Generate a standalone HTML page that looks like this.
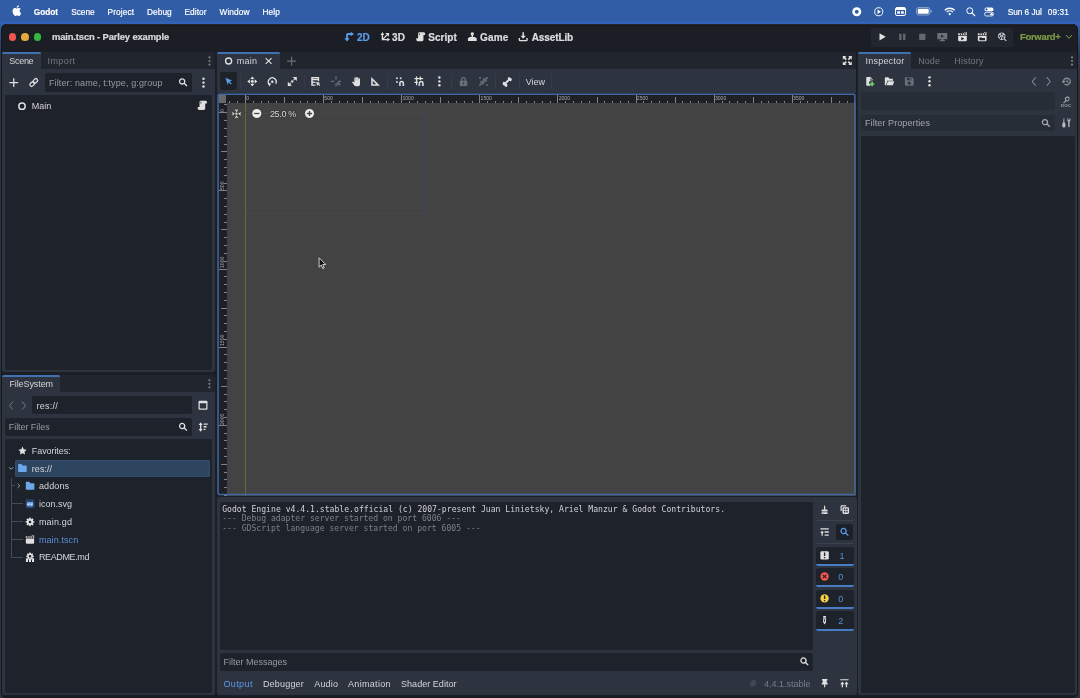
<!DOCTYPE html>
<html lang="en"><head><meta charset="utf-8"><title>main.tscn - Parley example - Godot Engine</title>
<style>
html,body{margin:0;padding:0}
body{width:1080px;height:698px;overflow:hidden;position:relative;background:#305da5;font-family:"Liberation Sans",sans-serif;}
#root{position:absolute;left:0;top:0;width:1080px;height:698px;will-change:transform}
.b{position:absolute}
.i{position:absolute;overflow:visible}
.t{position:absolute;white-space:pre;line-height:1;transform:translateY(-50%);font-family:"Liberation Sans",sans-serif}
.t.mb{-webkit-text-stroke:.18px currentColor}
.t.bd{-webkit-text-stroke:.22px currentColor}
.t.zs{text-shadow:0 0 1px rgba(0,0,0,.85),0 0 1px rgba(0,0,0,.6)}
.t.mono{font-family:"DejaVu Sans Mono","Liberation Mono",monospace}
.rl{position:absolute;font-size:5.100px;line-height:1;color:#a6a9ae;white-space:pre}
.rv{transform-origin:0 0;transform:rotate(-90deg)}
</style></head>
<body>
<div id="root">
<div class="b" style="left:0;top:0;width:1080px;height:25px;background:linear-gradient(#305da5 0,#305da5 20.500px,#3363b6 22px,#3363b6 25px)"></div>
<svg class="i" style="left:12.400px;top:5.300px;width:9.200px;height:11.100px;fill:#fff" viewBox="0 0 17 20"><path d="M14.100 10.600c0-2.400 2-3.500 2.100-3.600-1.100-1.700-2.900-1.900-3.500-1.900-1.500-.2-2.900.9-3.700.9-.8 0-1.900-.9-3.200-.8C4.200 5.200 2.700 6.100 1.900 7.500.1 10.500 1.400 15 3.100 17.500c.8 1.200 1.800 2.600 3.100 2.500 1.300 0 1.700-.8 3.200-.8s1.900.8 3.200.8 2.200-1.200 3-2.400c.9-1.400 1.300-2.700 1.300-2.800-.1 0-2.800-1.100-2.800-4.200zM11.700 3.300C12.400 2.500 12.800 1.300 12.700.2c-1 0-2.200.7-2.900 1.500-.6.700-1.200 1.900-1 3 1.100.1 2.200-.6 2.900-1.400z"/></svg>
<span class="t mb" id="t0" style="left:33.75px;top:11.70px;font-size:8.3px;color:#fff;font-weight:700;letter-spacing:-0.034px;">Godot</span>
<span class="t mb" id="t1" style="left:71.30px;top:11.70px;font-size:8.3px;color:#fff;letter-spacing:-0.066px;">Scene</span>
<span class="t mb" id="t2" style="left:107.50px;top:11.70px;font-size:8.3px;color:#fff;letter-spacing:0.139px;">Project</span>
<span class="t mb" id="t3" style="left:147.00px;top:11.70px;font-size:8.3px;color:#fff;letter-spacing:0.069px;">Debug</span>
<span class="t mb" id="t4" style="left:184.50px;top:11.70px;font-size:8.3px;color:#fff;letter-spacing:0.052px;">Editor</span>
<span class="t mb" id="t5" style="left:219.50px;top:11.70px;font-size:8.3px;color:#fff;letter-spacing:0.081px;">Window</span>
<span class="t mb" id="t6" style="left:262.50px;top:11.70px;font-size:8.3px;color:#fff;letter-spacing:0.105px;">Help</span>
<span class="t mb" id="t7" style="left:1007.80px;top:11.70px;font-size:8.3px;color:#fff;letter-spacing:-0.066px;">Sun 6 Jul</span>
<span class="t mb" id="t8" style="left:1047.80px;top:11.70px;font-size:8.3px;color:#fff;letter-spacing:0.067px;">09:31</span>
<svg class="i" style="left:852px;top:6.500px;width:9.500px;height:9.500px" viewBox="0 0 20 20"><circle cx="10" cy="10" r="9.500" fill="#fff"/><circle cx="10" cy="10" r="4" fill="#305da5"/></svg>
<svg class="i" style="left:874px;top:6.500px;width:9.500px;height:9.500px" viewBox="0 0 20 20"><circle cx="10" cy="10" r="8.500" fill="none" stroke="#fff" stroke-width="2"/><path d="M7.500 5.500v9l7-4.500z" fill="#fff"/></svg>
<svg class="i" style="left:894.500px;top:7px;width:11px;height:9px" viewBox="0 0 22 18"><rect x="1" y="1" width="20" height="16" rx="3" fill="none" stroke="#fff" stroke-width="2"/><rect x="2" y="2" width="18" height="4" fill="#fff"/><rect x="4.500" y="8.500" width="5.500" height="5" fill="#fff"/><rect x="12" y="8.500" width="5.500" height="5" fill="#fff"/></svg>
<svg class="i" style="left:916px;top:7px;width:16px;height:8.500px" viewBox="0 0 32 17"><rect x="1" y="1" width="27" height="15" rx="4.500" fill="none" stroke="#fff" stroke-opacity=".55" stroke-width="1.500"/><rect x="3.500" y="3.500" width="22" height="10" rx="2.500" fill="#fff"/><path d="M29.500 5.500v6c1.500-.5 2-1.700 2-3s-.5-2.500-2-3z" fill="#fff" fill-opacity=".6"/></svg>
<svg class="i" style="left:943.500px;top:6.500px;width:11.500px;height:9px" viewBox="0 0 23 18"><g fill="none" stroke="#fff" stroke-width="2.600" stroke-linecap="butt"><path d="M1.500 6.500a14.500 14.500 0 0 1 20 0"/><path d="M5.200 10.300a9.200 9.200 0 0 1 12.600 0"/></g><path d="M8.600 13.500a4.200 4.200 0 0 1 5.800 0L11.500 16.800z" fill="#fff"/></svg>
<svg class="i" style="left:966px;top:6.500px;width:9.500px;height:9.500px" viewBox="0 0 19 19"><circle cx="7.500" cy="7.500" r="6" fill="none" stroke="#fff" stroke-width="2"/><path d="M12 12l5.500 5.500" stroke="#fff" stroke-width="2.200" stroke-linecap="round"/></svg>
<svg class="i" style="left:983.500px;top:6.500px;width:10px;height:9.500px" viewBox="0 0 20 19"><rect x="1" y="1" width="18" height="7.500" rx="3.750" fill="#fff"/><circle cx="5" cy="4.750" r="2.200" fill="#305da5"/><rect x="1" y="10.500" width="18" height="7.500" rx="3.750" fill="none" stroke="#fff" stroke-width="1.600"/><circle cx="15" cy="14.250" r="2.400" fill="#fff"/></svg>
<div class="b" style="left:0;top:24px;width:1080px;height:674px;background:linear-gradient(#3160ae 0,#2e4c80 14px,#2d3a52 30px,#2d323b 60px,#2d3239 100%)"></div>
<div class="b" style="left:.8px;top:23.800px;width:1077.600px;height:674.700px;background:#1b1f25;border-radius:6px;box-shadow:inset 0 1px 0 0 #222427,inset 0 2px 0 0 #171a1f,inset 0 0 0 1px #14171d"></div>
<div class="b" style="left:8.65px;top:33.15px;width:7.700px;height:7.700px;border-radius:50%;background:#f0564f"></div>
<div class="b" style="left:21.15px;top:33.15px;width:7.700px;height:7.700px;border-radius:50%;background:#e5aa3d"></div>
<div class="b" style="left:33.65px;top:33.15px;width:7.700px;height:7.700px;border-radius:50%;background:#33b93f"></div>
<span class="t bd" id="t9" style="left:52.00px;top:37.00px;font-size:9.4px;color:#d7d8da;font-weight:700;letter-spacing:-0.130px;">main.tscn - Parley example</span>
<svg class="i" style="left:0;top:0;transform:translate(344.20px,31.80px);width:10px;height:10px;color:#5b9bea;fill:#5b9bea;" viewBox="0 0 16 16"><path d="M3 5a3 3 0 0 1 3-3h4.500V-.2l5.200 3.700-5.200 3.700V5H6v5.500h2.700l-4.200 5.200L.3 10.500H3z"/></svg>
<span class="t bd" id="t10" style="left:357.00px;top:38.00px;font-size:10px;color:#5b9bea;font-weight:700;letter-spacing:-0.048px;">2D</span>
<svg class="i" style="left:0;top:0;transform:translate(380.20px,31.80px);width:10px;height:10px;color:#e0e0e0;fill:#e0e0e0;" viewBox="0 0 16 16"><g fill="none" stroke="currentColor" stroke-width="2.100"><path d="M3.500 4.500v8h8.500"/><path d="M3.500 12.500 11.500 4.500"/></g><path d="M3.500 .3.500 5.200h6zM15.700 12.500 11.300 9.500v6zM14.200 1.800V8L8 1.800z"/></svg>
<span class="t bd" id="t11" style="left:392.00px;top:38.00px;font-size:10px;color:#dcdde0;font-weight:700;letter-spacing:0.252px;">3D</span>
<svg class="i" style="left:0;top:0;transform:translate(415.70px,31.80px);width:10px;height:10px;color:#e0e0e0;fill:#e0e0e0;" viewBox="0 0 16 16"><path d="M6 .8a2.200 2.200 0 0 0-2.200 2.200v7.500H1v2.300A2.200 2.200 0 0 0 3.200 15h7a2.200 2.200 0 0 0 2.200-2.200V5.200H15V3A2.200 2.200 0 0 0 12.800.8zm0 1.800c.3 0 .5.200.5.500v2.100H5.200V3c0-.3.300-.4.800-.4z"/></svg>
<span class="t bd" id="t12" style="left:428.20px;top:38.00px;font-size:10px;color:#dcdde0;font-weight:700;letter-spacing:0.059px;">Script</span>
<svg class="i" style="left:0;top:0;transform:translate(467.30px,31.80px);width:10px;height:10px;color:#e0e0e0;fill:#e0e0e0;" viewBox="0 0 16 16"><path d="M8 .8a2.700 2.700 0 0 0-1.200 5.100V8.500H4L1 10.500v4.300h14v-4.300l-3-2H9.200V5.900A2.700 2.700 0 0 0 8 .8z"/></svg>
<span class="t bd" id="t13" style="left:480.00px;top:38.00px;font-size:10px;color:#dcdde0;font-weight:700;letter-spacing:0.201px;">Game</span>
<svg class="i" style="left:0;top:0;transform:translate(518.20px,31.80px);width:10px;height:10px;color:#e0e0e0;fill:#e0e0e0;" viewBox="0 0 16 16"><path d="M6.800 .8v5.700H3.800L8 11.300l4.200-4.800H9.200V.8zM.8 9.800V13A2.200 2.200 0 0 0 3 15.200h10A2.200 2.200 0 0 0 15.200 13V9.800H13v3.200H3V9.800z"/></svg>
<span class="t bd" id="t14" style="left:531.70px;top:38.00px;font-size:10px;color:#dcdde0;font-weight:700;letter-spacing:-0.104px;">AssetLib</span>
<div class="b" style="left:871px;top:27.5px;width:142.00px;height:19.50px;background:#22262e;border-radius:2.5px;"></div>
<svg class="i" style="left:0;top:0;transform:translate(877.00px,31.80px);width:10px;height:10px;color:#e0e0e0;fill:#e0e0e0;opacity:1;" viewBox="0 0 16 16"><path d="M4 2.200v11.600L14 8z"/></svg>
<svg class="i" style="left:0;top:0;transform:translate(897.30px,31.80px);width:10px;height:10px;color:#e0e0e0;fill:#e0e0e0;opacity:0.35;" viewBox="0 0 16 16"><path d="M3 3h3.800v10H3zm6.200 0H13v10H9.200z"/></svg>
<svg class="i" style="left:0;top:0;transform:translate(917.30px,31.80px);width:10px;height:10px;color:#e0e0e0;fill:#e0e0e0;opacity:0.35;" viewBox="0 0 16 16"><rect x="3" y="3" width="10" height="10" rx="1"/></svg>
<svg class="i" style="left:0;top:0;transform:translate(937.30px,31.80px);width:10px;height:10px;color:#e0e0e0;fill:#e0e0e0;opacity:0.4;" viewBox="0 0 16 16"><path d="M1 2a1 1 0 0 0-1 1v8a1 1 0 0 0 1 1h5v1H4v2h8v-2h-2v-1h5a1 1 0 0 0 1-1V3a1 1 0 0 0-1-1zm5 2.500L10.500 7 6 9.500z" /></svg>
<svg class="i" style="left:0;top:0;transform:translate(957.50px,31.80px);width:10px;height:10px;color:#e0e0e0;fill:#e0e0e0;opacity:1;" viewBox="0 0 16 16"><path d="M1 6.500V13a2 2 0 0 0 2 2h10a2 2 0 0 0 2-2V6.500zm5 2L11 11l-5 2.500z"/><path d="M1 2.500h2.200l1 2.500H1zm3.700 0h2.200l1 2.500H5.700zm3.700 0h2.200l1 2.500H9.400zm3.700 0H15V5h-1.900z"/><path d="M11 .5h1.500v1.500H11zm2.500 0H15V2h-1.500z" opacity=".8"/></svg>
<svg class="i" style="left:0;top:0;transform:translate(977.20px,31.80px);width:10px;height:10px;color:#e0e0e0;fill:#e0e0e0;opacity:1;" viewBox="0 0 16 16"><path d="M1 6.500V13a2 2 0 0 0 2 2h10a2 2 0 0 0 2-2V6.500zM3.500 9H7l1 1h4.500v3.500h-9z" fill-rule="evenodd"/><path d="M1 2.500h2.200l1 2.500H1zm3.700 0h2.200l1 2.500H5.700zm3.700 0h2.200l1 2.500H9.400zm3.700 0H15V5h-1.900z"/><path d="M11 .5h1.500v1.500H11zm2.500 0H15V2h-1.500z" opacity=".8"/></svg>
<svg class="i" style="left:0;top:0;transform:translate(997.30px,31.80px);width:10px;height:10px;color:#e0e0e0;fill:#e0e0e0;opacity:0.92;" viewBox="0 0 16 16"><path d="M7 1a6 6 0 1 0 3.600 10.800l3.200 3.200 1.200-1.200-3.200-3.200A6 6 0 0 0 7 1zm0 1.500a1.500 1.500 0 1 1 0 3 1.500 1.500 0 0 1 0-3zM3.500 5a1.500 1.500 0 1 1 0 3 1.500 1.500 0 0 1 0-3zm7 0a1.500 1.500 0 1 1 0 3 1.500 1.500 0 0 1 0-3zM7 6.300a.8.800 0 1 1 0 1.500.8.800 0 0 1 0-1.500zM5 8.500a1.500 1.500 0 1 1 0 3 1.500 1.500 0 0 1 0-3zm4 0a1.500 1.500 0 1 1 0 3 1.500 1.500 0 0 1 0-3z"/></svg>
<span class="t bd" id="t15" style="left:1020.00px;top:37.00px;font-size:9.4px;color:#7d9a46;font-weight:700;letter-spacing:-0.246px;">Forward+</span>
<svg class="i" style="left:0;top:0;transform:translate(1065.00px,32.80px);width:8px;height:8px;color:#7d9a46;fill:#7d9a46;" viewBox="0 0 16 16"><path d="M2.500 5l5.500 6 5.500-6" fill="none" stroke="currentColor" stroke-width="2" stroke-linecap="round" stroke-linejoin="round"/></svg>
<div class="b" style="left:2.3px;top:52px;width:212.70px;height:17.00px;background:#21262e;border-radius:2.500px 2.500px 0 0;"></div><div class="b" style="left:2.3px;top:68.7px;width:212.70px;height:303.30px;background:#2d333f;border-radius:0 0 2.500px 2.500px;"></div><div class="b" style="left:2.3px;top:52px;width:38.70px;height:17.20px;background:#2d333f;border-top:2px solid #4171b0;box-sizing:border-box;border-radius:1.500px 1.500px 0 0;"></div>
<span class="t " id="t16" style="left:9.30px;top:61.00px;font-size:9px;color:#d4d5d8;letter-spacing:-0.306px;">Scene</span>
<span class="t " id="t17" style="left:47.50px;top:61.00px;font-size:9px;color:#73777f;letter-spacing:0.414px;">Import</span>
<svg class="i" style="left:0;top:0;transform:translate(205.00px,56.50px);width:9px;height:9px;color:#7a7e86;fill:#7a7e86;" viewBox="0 0 16 16"><circle cx="8" cy="1.700" r="1.950"/><circle cx="8" cy="8" r="1.950"/><circle cx="8" cy="14.300" r="1.950"/></svg>
<svg class="i" style="left:0;top:0;transform:translate(8.75px,77.50px);width:10px;height:10px;color:#e0e0e0;fill:#e0e0e0;" viewBox="0 0 16 16"><path d="M7 1v6H1v2h6v6h2V9h6V7H9V1z"/></svg>
<svg class="i" style="left:0;top:0;transform:translate(28.75px,77.50px);width:10px;height:10px;color:#e0e0e0;fill:#e0e0e0;" viewBox="0 0 16 16"><g transform="rotate(-45 8 8)" fill="none" stroke="currentColor" stroke-width="2"><rect x="0.300" y="5.300" width="8.400" height="5.400" rx="2.700"/><rect x="7.300" y="5.300" width="8.400" height="5.400" rx="2.700"/></g></svg>
<div class="b" style="left:45px;top:73px;width:147.00px;height:19.00px;background:#1e222a;border-radius:2.5px;"></div>
<span class="t " id="t18" style="left:49.00px;top:83.00px;font-size:9px;color:#989ba1;letter-spacing:0.119px;">Filter: name, t:type, g:group</span>
<svg class="i" style="left:0;top:0;transform:translate(177.95px,77.25px);width:10.3px;height:10.3px;color:#e0e0e0;fill:#e0e0e0;" viewBox="0 0 16 16"><path d="M6.5 1.5a5 5 0 1 0 2.9 9.1l3.8 3.8 1.5-1.5-3.8-3.8A5 5 0 0 0 6.5 1.5zm0 2a3 3 0 1 1 0 6 3 3 0 0 1 0-6z"/></svg>
<svg class="i" style="left:0;top:0;transform:translate(198.50px,77.60px);width:10px;height:10px;color:#e0e0e0;fill:#e0e0e0;" viewBox="0 0 16 16"><circle cx="8" cy="1.700" r="1.950"/><circle cx="8" cy="8" r="1.950"/><circle cx="8" cy="14.300" r="1.950"/></svg>
<div class="b" style="left:5px;top:95px;width:207.00px;height:275.00px;background:#1e222a;border-radius:2px;"></div>
<svg class="i" style="left:0;top:0;transform:translate(17.00px,101.20px);width:10px;height:10px;color:#e0e0e0;fill:#e0e0e0;" viewBox="0 0 16 16"><circle cx="8" cy="8" r="5.100" fill="none" stroke="currentColor" stroke-width="2.300"/></svg>
<span class="t " id="t19" style="left:31.75px;top:106.00px;font-size:9px;color:#d4d5d8;letter-spacing:-0.004px;">Main</span>
<svg class="i" style="left:0;top:0;transform:translate(197.05px,100.15px);width:10.5px;height:10.5px;color:#e0e0e0;fill:#e0e0e0;" viewBox="0 0 16 16"><path d="M6 .8a2.200 2.200 0 0 0-2.200 2.200v7.500H1v2.300A2.200 2.200 0 0 0 3.200 15h7a2.200 2.200 0 0 0 2.200-2.200V5.200H15V3A2.200 2.200 0 0 0 12.800.8zm0 1.800c.3 0 .5.200.5.500v2.100H5.200V3c0-.3.300-.4.800-.4z"/></svg>
<div class="b" style="left:2.3px;top:375px;width:212.70px;height:17.00px;background:#21262e;border-radius:2.500px 2.500px 0 0;"></div><div class="b" style="left:2.3px;top:391.7px;width:212.70px;height:303.60px;background:#2d333f;border-radius:0 0 2.500px 2.500px;"></div><div class="b" style="left:2.3px;top:375px;width:57.70px;height:17.20px;background:#2d333f;border-top:2px solid #4171b0;box-sizing:border-box;border-radius:1.500px 1.500px 0 0;"></div>
<span class="t " id="t20" style="left:9.40px;top:384.00px;font-size:9px;color:#d4d5d8;letter-spacing:-0.092px;">FileSystem</span>
<svg class="i" style="left:0;top:0;transform:translate(204.90px,379.30px);width:9px;height:9px;color:#7a7e86;fill:#7a7e86;" viewBox="0 0 16 16"><circle cx="8" cy="1.700" r="1.950"/><circle cx="8" cy="8" r="1.950"/><circle cx="8" cy="14.300" r="1.950"/></svg>
<svg class="i" style="left:0;top:0;transform:translate(6.60px,401.10px);width:9px;height:9px;color:#7b8088;fill:#7b8088;" viewBox="0 0 16 16"><path d="M10.800 1.500 5.200 8l5.600 6.500" fill="none" stroke="currentColor" stroke-width="1.700" stroke-linecap="round" stroke-linejoin="round"/></svg>
<svg class="i" style="left:0;top:0;transform:translate(19.45px,401.10px);width:9px;height:9px;color:#7b8088;fill:#7b8088;" viewBox="0 0 16 16"><path d="M5.200 1.500 10.800 8l-5.600 6.500" fill="none" stroke="currentColor" stroke-width="1.700" stroke-linecap="round" stroke-linejoin="round"/></svg>
<div class="b" style="left:32px;top:396px;width:160.00px;height:18.00px;background:#1e222a;border-radius:2px;"></div>
<span class="t " id="t21" style="left:36.50px;top:406.00px;font-size:9px;color:#d4d5d8;letter-spacing:0.247px;">res://</span>
<svg class="i" style="left:0;top:0;transform:translate(198.00px,400.20px);width:10px;height:10px;color:#e0e0e0;fill:#e0e0e0;" viewBox="0 0 16 16"><path d="M2.500 .8A1.700 1.700 0 0 0 .8 2.500v11a1.700 1.700 0 0 0 1.700 1.700h11a1.700 1.700 0 0 0 1.700-1.700v-11A1.700 1.700 0 0 0 13.500.8zM2.800 5h10.400v8.200H2.800z"/></svg>
<div class="b" style="left:5px;top:417.7px;width:187.00px;height:18.30px;background:#1e222a;border-radius:2px;"></div>
<span class="t " id="t22" style="left:8.75px;top:427.00px;font-size:9px;color:#989ba1;letter-spacing:-0.055px;">Filter Files</span>
<svg class="i" style="left:0;top:0;transform:translate(177.95px,421.85px);width:10.3px;height:10.3px;color:#e0e0e0;fill:#e0e0e0;" viewBox="0 0 16 16"><path d="M6.5 1.5a5 5 0 1 0 2.9 9.1l3.8 3.8 1.5-1.5-3.8-3.8A5 5 0 0 0 6.5 1.5zm0 2a3 3 0 1 1 0 6 3 3 0 0 1 0-6z"/></svg>
<svg class="i" style="left:0;top:0;transform:translate(198.00px,422.00px);width:10px;height:10px;color:#e0e0e0;fill:#e0e0e0;" viewBox="0 0 16 16"><path d="M4.200 .5 1 4.700h2.100v6.600H1l3.200 4.200 3.200-4.200H5.300V4.700h2.100zM9 2.200h6.500v2.100H9zm0 4.300h4.800v2.100H9zm0 4.300h3v2.100H9z"/></svg>
<div class="b" style="left:5px;top:439px;width:207.00px;height:253.70px;background:#1e222a;border-radius:2px;"></div>
<svg class="i" style="left:0;top:0;transform:translate(17.75px,445.90px);width:9.5px;height:9.5px;color:#e0e0e0;fill:#e0e0e0;" viewBox="0 0 16 16"><path d="M8 1.200l2.100 4.500 4.900.6-3.600 3.400.9 4.900L8 12.200l-4.300 2.400.9-4.900L1 6.300l4.900-.6z"/></svg>
<span class="t " id="t23" style="left:31.80px;top:451.00px;font-size:9px;color:#d4d5d8;letter-spacing:-0.082px;">Favorites:</span>
<div class="b" style="left:14.9px;top:459.5px;width:195.10px;height:17.50px;background:#2e4560;border-radius:2px;box-shadow:inset 0 0 0 .6px #3a5576;"></div>
<svg class="i" style="left:0;top:0;transform:translate(8.20px,465.40px);width:6px;height:6px;color:#a0a3a8;fill:#a0a3a8;" viewBox="0 0 16 16"><path d="M3 5.500l5 5 5-5" fill="none" stroke="currentColor" stroke-width="2.600" stroke-linecap="round" stroke-linejoin="round"/></svg>
<svg class="i" style="left:0;top:0;transform:translate(17.65px,463.25px);width:9.5px;height:9.5px;color:#6ea6ea;fill:#6ea6ea;" viewBox="0 0 16 16"><path d="M2 1.300a1.200 1.200 0 0 0-1.200 1.200V13.500a1.200 1.200 0 0 0 1.200 1.200h12a1.200 1.200 0 0 0 1.200-1.200V5a1.200 1.200 0 0 0-1.200-1.200H8.500L7.200 1.900A1.200 1.200 0 0 0 6.300 1.300z"/></svg>
<span class="t " id="t24" style="left:31.80px;top:469.00px;font-size:9px;color:#d4d5d8;letter-spacing:0.047px;">res://</span>
<div class="b" style="left:10.85px;top:477.5px;width:0.70px;height:79.50px;background:#454a53;"></div>
<div class="b" style="left:11.2px;top:485.45px;width:3.80px;height:0.70px;background:#454a53;"></div>
<div class="b" style="left:11.2px;top:503.45px;width:11.40px;height:0.70px;background:#454a53;"></div>
<div class="b" style="left:11.2px;top:521.4499999999999px;width:11.40px;height:0.70px;background:#454a53;"></div>
<div class="b" style="left:11.2px;top:539.25px;width:11.40px;height:0.70px;background:#454a53;"></div>
<div class="b" style="left:11.2px;top:556.65px;width:11.40px;height:0.70px;background:#454a53;"></div>
<svg class="i" style="left:0;top:0;transform:translate(15.80px,482.80px);width:6px;height:6px;color:#a0a3a8;fill:#a0a3a8;" viewBox="0 0 16 16"><path d="M5.500 3l5 5-5 5" fill="none" stroke="currentColor" stroke-width="2.600" stroke-linecap="round" stroke-linejoin="round"/></svg>
<svg class="i" style="left:0;top:0;transform:translate(25.35px,481.05px);width:9.5px;height:9.5px;color:#6ea6ea;fill:#6ea6ea;" viewBox="0 0 16 16"><path d="M2 1.300a1.200 1.200 0 0 0-1.200 1.200V13.500a1.200 1.200 0 0 0 1.200 1.200h12a1.200 1.200 0 0 0 1.200-1.200V5a1.200 1.200 0 0 0-1.200-1.200H8.500L7.200 1.900A1.200 1.200 0 0 0 6.300 1.300z"/></svg>
<span class="t " id="t25" style="left:39.00px;top:486.00px;font-size:9px;color:#d4d5d8;letter-spacing:0.095px;">addons</span>
<svg class="i" style="left:0;top:0;transform:translate(25.25px,499.05px);width:9.5px;height:9.5px;color:#e0e0e0;fill:#e0e0e0;" viewBox="0 0 16 16"><rect x=".5" y=".5" width="15" height="15" rx="2.500" fill="#2a426b"/><path d="M3.500 4.500 5.300 5.600 8 5l2.700.6 1.800-1.100.9 3.500v2.800L10.500 12.500h-5L2.600 10.800V8z" fill="#7db4f2"/><circle cx="5.800" cy="8.800" r="1" fill="#fff"/><circle cx="10.200" cy="8.800" r="1" fill="#fff"/><path d="M6.500 10.800h3v.9h-3z" fill="#2a426b"/></svg>
<span class="t " id="t26" style="left:38.90px;top:504.00px;font-size:9px;color:#d4d5d8;letter-spacing:0.021px;">icon.svg</span>
<svg class="i" style="left:0;top:0;transform:translate(25.00px,516.90px);width:10px;height:10px;color:#e0e0e0;fill:#e0e0e0;" viewBox="0 0 16 16"><path d="M7 1l-.4 2-.9.400-1.700-1.100L2.300 4l1.100 1.700-.4.900-2 .4v2l2 .4.400.9L2.300 12 4 13.700l1.700-1.100.9.400.4 2h2l.4-2 .9-.4 1.700 1.100L13.700 12l-1.100-1.700.4-.9 2-.4V7l-2-.4-.4-.9L13.700 4 12 2.300l-1.700 1.100-.9-.4L9 1zm1 5a2 2 0 1 1 0 4 2 2 0 0 1 0-4z"/></svg>
<span class="t " id="t27" style="left:38.90px;top:522.00px;font-size:9px;color:#d4d5d8;letter-spacing:0.167px;">main.gd</span>
<svg class="i" style="left:0;top:0;transform:translate(25.25px,534.75px);width:9.5px;height:9.5px;color:#e0e0e0;fill:#e0e0e0;" viewBox="0 0 16 16"><path d="M1 6.500V13a2 2 0 0 0 2 2h10a2 2 0 0 0 2-2V6.500z"/><path d="M1 2.500h2.200l1 2.500H1zm3.700 0h2.200l1 2.500H5.700zm3.700 0h2.200l1 2.500H9.400zm3.700 0H15V5h-1.900z"/><path d="M11 .5h1.500v1.500H11zm2.500 0H15V2h-1.500z" opacity=".8"/></svg>
<span class="t " id="t28" style="left:38.90px;top:540.00px;font-size:9px;color:#5a92da;letter-spacing:0.098px;">main.tscn</span>
<svg class="i" style="left:0;top:0;transform:translate(25.00px,552.20px);width:10px;height:10px;color:#e0e0e0;fill:#e0e0e0;" viewBox="0 0 16 16"><path d="M7 .5l-.3 1.600-.9.400L4.400 1.600 3 3l.9 1.400-.4.900L2 5.600V7.500l1.500.3.400.9-.5.800H12.600l-.5-.8.400-.9L14 7.500V5.600l-1.500-.3-.4-.9L13 3 11.600 1.600l-1.400.9-.9-.4L9 .5zM8 4.300a2.100 2.100 0 1 1 0 4.200 2.100 2.100 0 0 1 0-4.200z"/><path d="M1.500 9.500h13v2.300h-13zM1.500 11.500h3.300v4.200H1.500zm4.900 0h3.200v4.200H6.400zm4.800 0h3.300v4.200h-3.300z"/></svg>
<span class="t " id="t29" style="left:38.90px;top:557.00px;font-size:9px;color:#d4d5d8;letter-spacing:-0.368px;">README.md</span>
<div class="b" style="left:217px;top:52px;width:639.00px;height:17.00px;background:#21262e;border-radius:2.500px 2.500px 0 0;"></div>
<div class="b" style="left:217px;top:69px;width:639.00px;height:24.50px;background:#2d333f;"></div>
<div class="b" style="left:217.2px;top:52px;width:62.80px;height:17.20px;background:#2d333f;border-top:2px solid #4171b0;box-sizing:border-box;border-radius:1.500px 1.500px 0 0;"></div>
<svg class="i" style="left:0;top:0;transform:translate(223.85px,56.25px);width:9.5px;height:9.5px;color:#e0e0e0;fill:#e0e0e0;" viewBox="0 0 16 16"><circle cx="8" cy="8" r="5.100" fill="none" stroke="currentColor" stroke-width="2.300"/></svg>
<span class="t " id="t30" style="left:236.80px;top:61.00px;font-size:9px;color:#d4d5d8;letter-spacing:0.221px;">main</span>
<svg class="i" style="left:0;top:0;transform:translate(264.10px,56.50px);width:9px;height:9px;color:#e0e0e0;fill:#e0e0e0;" viewBox="0 0 16 16"><path d="M3.500 2.100 2.100 3.500 6.600 8l-4.500 4.500 1.400 1.400L8 9.400l4.500 4.500 1.400-1.400L9.400 8l4.500-4.500-1.400-1.400L8 6.600z"/></svg>
<svg class="i" style="left:0;top:0;transform:translate(286.60px,56.00px);width:10px;height:10px;color:#686e78;fill:#686e78;" viewBox="0 0 16 16"><path d="M7 1v6H1v2h6v6h2V9h6V7H9V1z"/></svg>
<svg class="i" style="left:0;top:0;transform:translate(842.30px,55.60px);width:10px;height:10px;color:#e0e0e0;fill:#e0e0e0;" viewBox="0 0 16 16"><path d="M.8 .8h5.700L4.600 2.700 7.300 5.400 5.400 7.300 2.700 4.600.8 6.500zM15.200 .8v5.700L13.300 4.600 10.600 7.300 8.700 5.400 11.400 2.700 9.500 .8zM.8 15.200V9.500L2.700 11.400 5.400 8.700 7.300 10.600 4.600 13.300 6.500 15.200zM15.200 15.200H9.500L11.400 13.300 8.700 10.600 10.600 8.700 13.300 11.400 15.200 9.500z"/></svg>
<div class="b" style="left:219.9px;top:72.4px;width:17.30px;height:17.60px;background:#1d2128;border-radius:2.5px;"></div>
<svg class="i" style="left:0;top:0;transform:translate(224.30px,77.00px);width:8.8px;height:8.8px;color:#5b9bea;fill:#5b9bea;" viewBox="0 0 16 16"><path d="M2 1.500l4.200 12.600 1.900-4.500 3.900 3.900 1.500-1.500-3.900-3.900 4.500-1.900z"/></svg>
<div class="b" style="left:240.4px;top:73.5px;width:0.80px;height:16.00px;background:#353c48;"></div>
<div class="b" style="left:303.90000000000003px;top:73.5px;width:0.80px;height:16.00px;background:#353c48;"></div>
<div class="b" style="left:387.1px;top:73.5px;width:0.80px;height:16.00px;background:#353c48;"></div>
<div class="b" style="left:451.3px;top:73.5px;width:0.80px;height:16.00px;background:#353c48;"></div>
<div class="b" style="left:495.40000000000003px;top:73.5px;width:0.80px;height:16.00px;background:#353c48;"></div>
<div class="b" style="left:518.6px;top:73.5px;width:0.80px;height:16.00px;background:#353c48;"></div>
<div class="b" style="left:551.2px;top:73.5px;width:0.80px;height:16.00px;background:#353c48;"></div>
<svg class="i" style="left:0;top:0;transform:translate(247.30px,76.40px);width:10px;height:10px;color:#e0e0e0;fill:#e0e0e0;opacity:1;" viewBox="0 0 16 16"><path d="M8 0 4.600 4.200h6.800zM8 16l3.400-4.200H4.600zM0 8l4.200 3.400V4.600zm16 0-4.200-3.400v6.800z"/><path d="M7.300 4h1.400v8H7.300zM4 7.300h8v1.400H4z" opacity=".45"/><circle cx="8" cy="8" r="2.300"/></svg>
<svg class="i" style="left:0;top:0;transform:translate(267.30px,76.40px);width:10px;height:10px;color:#e0e0e0;fill:#e0e0e0;opacity:1;" viewBox="0 0 16 16"><path d="M2.840 12.200A6.300 6.300 0 1 1 13.460 11.750" fill="none" stroke="currentColor" stroke-width="2.100"/><path d="M.2 10.600l5.800.7L3.700 16z"/><circle cx="8" cy="8.500" r="2.100"/></svg>
<svg class="i" style="left:0;top:0;transform:translate(287.30px,76.40px);width:10px;height:10px;color:#e0e0e0;fill:#e0e0e0;opacity:1;" viewBox="0 0 16 16"><path d="M8.500 .8h6.700v6.700zM7.500 15.200H.8V8.500z"/><path d="M11.800 3.200l1 1-2.300 2.300-1-1zM4.200 12.800l-1-1 2.300-2.300 1 1z"/><circle cx="8" cy="8" r="1.900"/></svg>
<svg class="i" style="left:0;top:0;transform:translate(310.30px,76.40px);width:10px;height:10px;color:#e0e0e0;fill:#e0e0e0;opacity:1;" viewBox="0 0 16 16"><path d="M1.500 1v14h6.800v-2.200H4V10.600h4.300V8.400H4V6.200h8v1.600h2.200V1zM4 3.200h8v1H4z"/><path d="M9.200 8.600l1.900 6.900 1.400-2.400 2.200 2.200 1.200-1.200-2.200-2.200 2.400-1.400z"/></svg>
<svg class="i" style="left:0;top:0;transform:translate(331.00px,76.40px);width:10px;height:10px;color:#e0e0e0;fill:#e0e0e0;opacity:0.35;" viewBox="0 0 16 16"><path d="M7 0v5h2V0zM0 7v2h5V7zm11 0v2h5V7zm-4 4v5h2v-5zM9 9l2 6.500 1.300-2.400 2.200 2.200 1-1-2.200-2.200 2.400-1.300z"/></svg>
<svg class="i" style="left:0;top:0;transform:translate(351.50px,76.40px);width:10px;height:10px;color:#e0e0e0;fill:#e0e0e0;opacity:1;" viewBox="0 0 16 16"><path d="M8.200 .8a1.100 1.100 0 0 0-1.100 1.100V6.500h-.3V2.600a1.100 1.100 0 0 0-2.200 0V10L3.300 8.700a1.200 1.200 0 0 0-1.900 1.500l3.200 4.200a3 3 0 0 0 2.400 1.200h3.600a3 3 0 0 0 3-3V4a1.100 1.100 0 0 0-2.200 0v2.500h-.3V2.300a1.100 1.100 0 0 0-2.200 0v4.200h-.3V1.900A1.100 1.100 0 0 0 8.200.8z"/></svg>
<svg class="i" style="left:0;top:0;transform:translate(370.40px,76.40px);width:10px;height:10px;color:#e0e0e0;fill:#e0e0e0;opacity:1;" viewBox="0 0 16 16"><path d="M1.300 1v14h14zM3.800 7.100 9.200 12.500H3.800z"/></svg>
<svg class="i" style="left:0;top:0;transform:translate(395.20px,76.40px);width:10px;height:10px;color:#e0e0e0;fill:#e0e0e0;opacity:1;" viewBox="0 0 16 16"><circle cx="2.800" cy="3" r="1.500"/><circle cx="8.800" cy="3" r="1.500"/><circle cx="2.800" cy="9" r="1.500"/><path d="M6.300 15.500V11a4 4 0 0 1 8 0v4.500h-2.400V11a1.600 1.600 0 0 0-3.200 0v4.500z"/><path d="M6.300 13.500h2.400v2H6.300zm5.600 0h2.400v2h-2.400z" fill="#9ec4f5"/></svg>
<svg class="i" style="left:0;top:0;transform:translate(414.40px,76.40px);width:10px;height:10px;color:#e0e0e0;fill:#e0e0e0;opacity:1;" viewBox="0 0 16 16"><path d="M2.500 0v2.500H0v2h2.500v4H0v2h2.500V14h2v-3.500h1v-2h-1v-4h4v1.300h2V4.500H14v-2h-3.500V0h-2v2.500h-4V0z"/><path d="M6.800 15.500V11a4 4 0 0 1 8 0v4.500h-2.400V11a1.600 1.600 0 0 0-3.200 0v4.500z"/><path d="M6.800 13.500h2.400v2H6.800zm5.600 0h2.400v2h-2.400z" fill="#9ec4f5"/></svg>
<svg class="i" style="left:0;top:0;transform:translate(434.40px,76.40px);width:10px;height:10px;color:#e0e0e0;fill:#e0e0e0;opacity:1;" viewBox="0 0 16 16"><circle cx="8" cy="1.700" r="1.950"/><circle cx="8" cy="8" r="1.950"/><circle cx="8" cy="14.300" r="1.950"/></svg>
<svg class="i" style="left:0;top:0;transform:translate(458.50px,76.40px);width:10px;height:10px;color:#e0e0e0;fill:#e0e0e0;opacity:0.35;" viewBox="0 0 16 16"><path d="M8 .8A4.200 4.200 0 0 0 3.800 5v2H3a1 1 0 0 0-1 1v6.200a1 1 0 0 0 1 1h10a1 1 0 0 0 1-1V8a1 1 0 0 0-1-1h-.8V5A4.200 4.200 0 0 0 8 .8zm0 2.300c1.100 0 1.900.8 1.900 1.900v2H6.100V5c0-1.100.8-1.900 1.900-1.900zM7 9.800h2V13H7z"/></svg>
<svg class="i" style="left:0;top:0;transform:translate(478.50px,76.40px);width:10px;height:10px;color:#e0e0e0;fill:#e0e0e0;opacity:0.3;" viewBox="0 0 16 16"><path d="M1 1v3h2V3h1V1zm11 0v2h1v1h2V1zM7 3v4H3v6h6V9h4V3zM1 12v3h3v-2H3v-1zm12 0v1h-1v2h3v-3z"/></svg>
<svg class="i" style="left:0;top:0;transform:translate(502.20px,76.40px);width:10px;height:10px;color:#e0e0e0;fill:#e0e0e0;opacity:1;" viewBox="0 0 16 16"><path d="M11.500 .8a2.500 2.500 0 0 0-2.100 3.800L4.600 9.400a2.500 2.500 0 1 0-1.200 4.600 2.500 2.500 0 1 0 3.300-2.200l4.700-4.700a2.500 2.500 0 1 0 1.200-4.600 2.500 2.500 0 0 0-1.100-1.700z"/></svg>
<span class="t " id="t31" style="left:525.70px;top:82.00px;font-size:9px;color:#d4d5d8;letter-spacing:-0.040px;">View</span>
<div class="b" id="vp" style="left:217px;top:93px;width:639px;height:402.5px;background:#434343;overflow:hidden;">
<div class="b" style="left:28.30px;top:19.60px;width:180px;height:101.600px;border-top:.8px dotted #4c4c4e;border-bottom:.8px dotted #4c4c4e;box-sizing:border-box"></div>
<div class="b" style="left:207.40px;top:19.60px;width:1.700px;height:101.600px;background:#3c4458"></div>
<div class="b" style="left:27.55px;top:10px;width:1.300px;height:400px;background:#5e7033"></div>
<div class="b" style="left:9.599999999999994px;top:19.10px;width:19.20px;height:1px;background:#4a4545"></div>
<div class="b" style="left:0;top:0;width:700px;height:10px;background:#1d2127"></div>
<div class="b" style="left:0;top:0;width:9.599999999999994px;height:420px;background:#1d2127"></div>
<div class="b" style="left:1.60px;top:2.00px;width:7.80px;height:7.80px;background:#686868"></div>
<div class="b" style="left:12.33px;top:7.60px;width:.7px;height:2.40px;background:#7e8187"></div>
<div class="b" style="left:20.14px;top:7.60px;width:.7px;height:2.40px;background:#7e8187"></div>
<div class="b" style="left:27.95px;top:1.60px;width:.7px;height:8.40px;background:#7e8187"></div>
<div class="rl" style="left:29.20px;top:3.2px">0</div>
<div class="b" style="left:35.76px;top:7.60px;width:.7px;height:2.40px;background:#7e8187"></div>
<div class="b" style="left:43.58px;top:7.60px;width:.7px;height:2.40px;background:#7e8187"></div>
<div class="b" style="left:51.39px;top:7.60px;width:.7px;height:2.40px;background:#7e8187"></div>
<div class="b" style="left:59.20px;top:7.60px;width:.7px;height:2.40px;background:#7e8187"></div>
<div class="b" style="left:67.01px;top:3.95px;width:.7px;height:6.05px;background:#7e8187"></div>
<div class="b" style="left:74.83px;top:7.60px;width:.7px;height:2.40px;background:#7e8187"></div>
<div class="b" style="left:82.64px;top:7.60px;width:.7px;height:2.40px;background:#7e8187"></div>
<div class="b" style="left:90.45px;top:7.60px;width:.7px;height:2.40px;background:#7e8187"></div>
<div class="b" style="left:98.26px;top:7.60px;width:.7px;height:2.40px;background:#7e8187"></div>
<div class="b" style="left:106.08px;top:1.60px;width:.7px;height:8.40px;background:#7e8187"></div>
<div class="rl" style="left:107.33px;top:3.2px">500</div>
<div class="b" style="left:113.89px;top:7.60px;width:.7px;height:2.40px;background:#7e8187"></div>
<div class="b" style="left:121.70px;top:7.60px;width:.7px;height:2.40px;background:#7e8187"></div>
<div class="b" style="left:129.51px;top:7.60px;width:.7px;height:2.40px;background:#7e8187"></div>
<div class="b" style="left:137.33px;top:7.60px;width:.7px;height:2.40px;background:#7e8187"></div>
<div class="b" style="left:145.14px;top:3.95px;width:.7px;height:6.05px;background:#7e8187"></div>
<div class="b" style="left:152.95px;top:7.60px;width:.7px;height:2.40px;background:#7e8187"></div>
<div class="b" style="left:160.76px;top:7.60px;width:.7px;height:2.40px;background:#7e8187"></div>
<div class="b" style="left:168.58px;top:7.60px;width:.7px;height:2.40px;background:#7e8187"></div>
<div class="b" style="left:176.39px;top:7.60px;width:.7px;height:2.40px;background:#7e8187"></div>
<div class="b" style="left:184.20px;top:1.60px;width:.7px;height:8.40px;background:#7e8187"></div>
<div class="rl" style="left:185.45px;top:3.2px">1000</div>
<div class="b" style="left:192.01px;top:7.60px;width:.7px;height:2.40px;background:#7e8187"></div>
<div class="b" style="left:199.83px;top:7.60px;width:.7px;height:2.40px;background:#7e8187"></div>
<div class="b" style="left:207.64px;top:7.60px;width:.7px;height:2.40px;background:#7e8187"></div>
<div class="b" style="left:215.45px;top:7.60px;width:.7px;height:2.40px;background:#7e8187"></div>
<div class="b" style="left:223.26px;top:3.95px;width:.7px;height:6.05px;background:#7e8187"></div>
<div class="b" style="left:231.08px;top:7.60px;width:.7px;height:2.40px;background:#7e8187"></div>
<div class="b" style="left:238.89px;top:7.60px;width:.7px;height:2.40px;background:#7e8187"></div>
<div class="b" style="left:246.70px;top:7.60px;width:.7px;height:2.40px;background:#7e8187"></div>
<div class="b" style="left:254.51px;top:7.60px;width:.7px;height:2.40px;background:#7e8187"></div>
<div class="b" style="left:262.32px;top:1.60px;width:.7px;height:8.40px;background:#7e8187"></div>
<div class="rl" style="left:263.57px;top:3.2px">1500</div>
<div class="b" style="left:270.14px;top:7.60px;width:.7px;height:2.40px;background:#7e8187"></div>
<div class="b" style="left:277.95px;top:7.60px;width:.7px;height:2.40px;background:#7e8187"></div>
<div class="b" style="left:285.76px;top:7.60px;width:.7px;height:2.40px;background:#7e8187"></div>
<div class="b" style="left:293.57px;top:7.60px;width:.7px;height:2.40px;background:#7e8187"></div>
<div class="b" style="left:301.39px;top:3.95px;width:.7px;height:6.05px;background:#7e8187"></div>
<div class="b" style="left:309.20px;top:7.60px;width:.7px;height:2.40px;background:#7e8187"></div>
<div class="b" style="left:317.01px;top:7.60px;width:.7px;height:2.40px;background:#7e8187"></div>
<div class="b" style="left:324.82px;top:7.60px;width:.7px;height:2.40px;background:#7e8187"></div>
<div class="b" style="left:332.64px;top:7.60px;width:.7px;height:2.40px;background:#7e8187"></div>
<div class="b" style="left:340.45px;top:1.60px;width:.7px;height:8.40px;background:#7e8187"></div>
<div class="rl" style="left:341.70px;top:3.2px">2000</div>
<div class="b" style="left:348.26px;top:7.60px;width:.7px;height:2.40px;background:#7e8187"></div>
<div class="b" style="left:356.07px;top:7.60px;width:.7px;height:2.40px;background:#7e8187"></div>
<div class="b" style="left:363.89px;top:7.60px;width:.7px;height:2.40px;background:#7e8187"></div>
<div class="b" style="left:371.70px;top:7.60px;width:.7px;height:2.40px;background:#7e8187"></div>
<div class="b" style="left:379.51px;top:3.95px;width:.7px;height:6.05px;background:#7e8187"></div>
<div class="b" style="left:387.32px;top:7.60px;width:.7px;height:2.40px;background:#7e8187"></div>
<div class="b" style="left:395.14px;top:7.60px;width:.7px;height:2.40px;background:#7e8187"></div>
<div class="b" style="left:402.95px;top:7.60px;width:.7px;height:2.40px;background:#7e8187"></div>
<div class="b" style="left:410.76px;top:7.60px;width:.7px;height:2.40px;background:#7e8187"></div>
<div class="b" style="left:418.57px;top:1.60px;width:.7px;height:8.40px;background:#7e8187"></div>
<div class="rl" style="left:419.82px;top:3.2px">2500</div>
<div class="b" style="left:426.39px;top:7.60px;width:.7px;height:2.40px;background:#7e8187"></div>
<div class="b" style="left:434.20px;top:7.60px;width:.7px;height:2.40px;background:#7e8187"></div>
<div class="b" style="left:442.01px;top:7.60px;width:.7px;height:2.40px;background:#7e8187"></div>
<div class="b" style="left:449.82px;top:7.60px;width:.7px;height:2.40px;background:#7e8187"></div>
<div class="b" style="left:457.64px;top:3.95px;width:.7px;height:6.05px;background:#7e8187"></div>
<div class="b" style="left:465.45px;top:7.60px;width:.7px;height:2.40px;background:#7e8187"></div>
<div class="b" style="left:473.26px;top:7.60px;width:.7px;height:2.40px;background:#7e8187"></div>
<div class="b" style="left:481.07px;top:7.60px;width:.7px;height:2.40px;background:#7e8187"></div>
<div class="b" style="left:488.89px;top:7.60px;width:.7px;height:2.40px;background:#7e8187"></div>
<div class="b" style="left:496.70px;top:1.60px;width:.7px;height:8.40px;background:#7e8187"></div>
<div class="rl" style="left:497.95px;top:3.2px">3000</div>
<div class="b" style="left:504.51px;top:7.60px;width:.7px;height:2.40px;background:#7e8187"></div>
<div class="b" style="left:512.32px;top:7.60px;width:.7px;height:2.40px;background:#7e8187"></div>
<div class="b" style="left:520.14px;top:7.60px;width:.7px;height:2.40px;background:#7e8187"></div>
<div class="b" style="left:527.95px;top:7.60px;width:.7px;height:2.40px;background:#7e8187"></div>
<div class="b" style="left:535.76px;top:3.95px;width:.7px;height:6.05px;background:#7e8187"></div>
<div class="b" style="left:543.57px;top:7.60px;width:.7px;height:2.40px;background:#7e8187"></div>
<div class="b" style="left:551.39px;top:7.60px;width:.7px;height:2.40px;background:#7e8187"></div>
<div class="b" style="left:559.20px;top:7.60px;width:.7px;height:2.40px;background:#7e8187"></div>
<div class="b" style="left:567.01px;top:7.60px;width:.7px;height:2.40px;background:#7e8187"></div>
<div class="b" style="left:574.82px;top:1.60px;width:.7px;height:8.40px;background:#7e8187"></div>
<div class="rl" style="left:576.07px;top:3.2px">3500</div>
<div class="b" style="left:582.64px;top:7.60px;width:.7px;height:2.40px;background:#7e8187"></div>
<div class="b" style="left:590.45px;top:7.60px;width:.7px;height:2.40px;background:#7e8187"></div>
<div class="b" style="left:598.26px;top:7.60px;width:.7px;height:2.40px;background:#7e8187"></div>
<div class="b" style="left:606.07px;top:7.60px;width:.7px;height:2.40px;background:#7e8187"></div>
<div class="b" style="left:613.89px;top:3.95px;width:.7px;height:6.05px;background:#7e8187"></div>
<div class="b" style="left:621.70px;top:7.60px;width:.7px;height:2.40px;background:#7e8187"></div>
<div class="b" style="left:629.51px;top:7.60px;width:.7px;height:2.40px;background:#7e8187"></div>
<div class="b" style="left:637.32px;top:7.60px;width:.7px;height:2.40px;background:#7e8187"></div>
<div class="b" style="left:7.20px;top:11.44px;width:2.40px;height:.7px;background:#7e8187"></div>
<div class="b" style="left:1.60px;top:19.25px;width:8.00px;height:.7px;background:#7e8187"></div>
<div class="rl rv" style="left:3px;top:19.10px">0</div>
<div class="b" style="left:7.20px;top:27.06px;width:2.40px;height:.7px;background:#7e8187"></div>
<div class="b" style="left:7.20px;top:34.87px;width:2.40px;height:.7px;background:#7e8187"></div>
<div class="b" style="left:7.20px;top:42.69px;width:2.40px;height:.7px;background:#7e8187"></div>
<div class="b" style="left:7.20px;top:50.50px;width:2.40px;height:.7px;background:#7e8187"></div>
<div class="b" style="left:3.84px;top:58.31px;width:5.76px;height:.7px;background:#7e8187"></div>
<div class="b" style="left:7.20px;top:66.12px;width:2.40px;height:.7px;background:#7e8187"></div>
<div class="b" style="left:7.20px;top:73.94px;width:2.40px;height:.7px;background:#7e8187"></div>
<div class="b" style="left:7.20px;top:81.75px;width:2.40px;height:.7px;background:#7e8187"></div>
<div class="b" style="left:7.20px;top:89.56px;width:2.40px;height:.7px;background:#7e8187"></div>
<div class="b" style="left:1.60px;top:97.38px;width:8.00px;height:.7px;background:#7e8187"></div>
<div class="rl rv" style="left:3px;top:97.22px">500</div>
<div class="b" style="left:7.20px;top:105.19px;width:2.40px;height:.7px;background:#7e8187"></div>
<div class="b" style="left:7.20px;top:113.00px;width:2.40px;height:.7px;background:#7e8187"></div>
<div class="b" style="left:7.20px;top:120.81px;width:2.40px;height:.7px;background:#7e8187"></div>
<div class="b" style="left:7.20px;top:128.62px;width:2.40px;height:.7px;background:#7e8187"></div>
<div class="b" style="left:3.84px;top:136.44px;width:5.76px;height:.7px;background:#7e8187"></div>
<div class="b" style="left:7.20px;top:144.25px;width:2.40px;height:.7px;background:#7e8187"></div>
<div class="b" style="left:7.20px;top:152.06px;width:2.40px;height:.7px;background:#7e8187"></div>
<div class="b" style="left:7.20px;top:159.88px;width:2.40px;height:.7px;background:#7e8187"></div>
<div class="b" style="left:7.20px;top:167.69px;width:2.40px;height:.7px;background:#7e8187"></div>
<div class="b" style="left:1.60px;top:175.50px;width:8.00px;height:.7px;background:#7e8187"></div>
<div class="rl rv" style="left:3px;top:175.35px">1000</div>
<div class="b" style="left:7.20px;top:183.31px;width:2.40px;height:.7px;background:#7e8187"></div>
<div class="b" style="left:7.20px;top:191.12px;width:2.40px;height:.7px;background:#7e8187"></div>
<div class="b" style="left:7.20px;top:198.94px;width:2.40px;height:.7px;background:#7e8187"></div>
<div class="b" style="left:7.20px;top:206.75px;width:2.40px;height:.7px;background:#7e8187"></div>
<div class="b" style="left:3.84px;top:214.56px;width:5.76px;height:.7px;background:#7e8187"></div>
<div class="b" style="left:7.20px;top:222.38px;width:2.40px;height:.7px;background:#7e8187"></div>
<div class="b" style="left:7.20px;top:230.19px;width:2.40px;height:.7px;background:#7e8187"></div>
<div class="b" style="left:7.20px;top:238.00px;width:2.40px;height:.7px;background:#7e8187"></div>
<div class="b" style="left:7.20px;top:245.81px;width:2.40px;height:.7px;background:#7e8187"></div>
<div class="b" style="left:1.60px;top:253.62px;width:8.00px;height:.7px;background:#7e8187"></div>
<div class="rl rv" style="left:3px;top:253.47px">1500</div>
<div class="b" style="left:7.20px;top:261.44px;width:2.40px;height:.7px;background:#7e8187"></div>
<div class="b" style="left:7.20px;top:269.25px;width:2.40px;height:.7px;background:#7e8187"></div>
<div class="b" style="left:7.20px;top:277.06px;width:2.40px;height:.7px;background:#7e8187"></div>
<div class="b" style="left:7.20px;top:284.88px;width:2.40px;height:.7px;background:#7e8187"></div>
<div class="b" style="left:3.84px;top:292.69px;width:5.76px;height:.7px;background:#7e8187"></div>
<div class="b" style="left:7.20px;top:300.50px;width:2.40px;height:.7px;background:#7e8187"></div>
<div class="b" style="left:7.20px;top:308.31px;width:2.40px;height:.7px;background:#7e8187"></div>
<div class="b" style="left:7.20px;top:316.12px;width:2.40px;height:.7px;background:#7e8187"></div>
<div class="b" style="left:7.20px;top:323.94px;width:2.40px;height:.7px;background:#7e8187"></div>
<div class="b" style="left:1.60px;top:331.75px;width:8.00px;height:.7px;background:#7e8187"></div>
<div class="rl rv" style="left:3px;top:331.60px">2000</div>
<div class="b" style="left:7.20px;top:339.56px;width:2.40px;height:.7px;background:#7e8187"></div>
<div class="b" style="left:7.20px;top:347.38px;width:2.40px;height:.7px;background:#7e8187"></div>
<div class="b" style="left:7.20px;top:355.19px;width:2.40px;height:.7px;background:#7e8187"></div>
<div class="b" style="left:7.20px;top:363.00px;width:2.40px;height:.7px;background:#7e8187"></div>
<div class="b" style="left:3.84px;top:370.81px;width:5.76px;height:.7px;background:#7e8187"></div>
<div class="b" style="left:7.20px;top:378.62px;width:2.40px;height:.7px;background:#7e8187"></div>
<div class="b" style="left:7.20px;top:386.44px;width:2.40px;height:.7px;background:#7e8187"></div>
<div class="b" style="left:7.20px;top:394.25px;width:2.40px;height:.7px;background:#7e8187"></div>
<div class="b" style="left:7.20px;top:402.06px;width:2.40px;height:.7px;background:#7e8187"></div>
<svg class="i" style="left:0;top:0;width:639px;height:402.5px" viewBox="217 93 639 402.5"><rect x="218.05" y="94.15" width="636.9" height="400.35" rx="1.2" fill="none" stroke="#4069a3" stroke-width="1.500"/></svg>
</div>
<svg class="i" style="left:0;top:0;transform:translate(231.60px,108.80px);width:9.8px;height:9.8px;color:#e6e6e6;fill:#e6e6e6;filter:drop-shadow(0 0 .5px rgba(0,0,0,.8));" viewBox="0 0 16 16"><path d="M4.800 .3 8 5.500 11.200 .3 8 1.800zM4.800 15.700 8 10.500l3.200 5.200L8 14.200zM.3 4.800 5.500 8 .3 11.200 1.800 8zM15.700 4.800 10.500 8l5.200 3.200L14.200 8z"/><rect x="6.300" y="6.300" width="3.400" height="3.400"/></svg>
<svg class="i" style="left:0;top:0;transform:translate(251.60px,108.30px);width:10.4px;height:10.4px;color:#f0f0f0;fill:#f0f0f0;filter:drop-shadow(0 0 .5px rgba(0,0,0,.8));" viewBox="0 0 16 16"><circle cx="8" cy="8" r="7"/><rect x="4" y="7" width="8" height="2" fill="#434343"/></svg>
<span class="t zs" id="t32" style="left:269.90px;top:114.00px;font-size:9px;color:#e0e0e0;letter-spacing:-0.322px;">25.0 %</span>
<svg class="i" style="left:0;top:0;transform:translate(304.30px,108.30px);width:10.4px;height:10.4px;color:#f0f0f0;fill:#f0f0f0;filter:drop-shadow(0 0 .5px rgba(0,0,0,.8));" viewBox="0 0 16 16"><circle cx="8" cy="8" r="7"/><path d="M7 4v3H4v2h3v3h2V9h3V7H9V4z" fill="#434343"/></svg>
<svg class="i" style="left:318.300px;top:256.700px;width:8.800px;height:13.200px" viewBox="0 0 16 24"><path d="M2 1.500v17l4-3.800 2.700 6.300 2.600-1.100-2.700-6.200H14z" fill="#111" stroke="#fff" stroke-width="1.400" stroke-linejoin="round"/></svg>
<div class="b" style="left:217px;top:497.4px;width:639.70px;height:197.90px;background:#2d333f;border-radius:2.5px;"></div>
<div class="b" style="left:220px;top:502px;width:593.00px;height:148.00px;background:#1e222a;border-radius:2px;"></div>
<span class="t mono" id="t33" style="left:222.20px;top:509.10px;font-size:8.1px;color:#d0d1d4;letter-spacing:0.009px;">Godot Engine v4.4.1.stable.official (c) 2007-present Juan Linietsky, Ariel Manzur &amp; Godot Contributors.</span>
<span class="t mono" id="t34" style="left:222.20px;top:518.10px;font-size:8.1px;color:#7c8087;letter-spacing:0.000px;">--- Debug adapter server started on port 6006 ---</span>
<span class="t mono" id="t35" style="left:222.20px;top:528.00px;font-size:8.1px;color:#7c8087;letter-spacing:0.001px;">--- GDScript language server started on port 6005 ---</span>
<div class="b" style="left:220px;top:653.1px;width:593.10px;height:17.50px;background:#1e222a;border-radius:2px;"></div>
<span class="t " id="t36" style="left:223.40px;top:662.00px;font-size:9px;color:#989ba1;letter-spacing:0.005px;">Filter Messages</span>
<svg class="i" style="left:0;top:0;transform:translate(799.25px,656.35px);width:10.3px;height:10.3px;color:#e0e0e0;fill:#e0e0e0;" viewBox="0 0 16 16"><path d="M6.5 1.5a5 5 0 1 0 2.9 9.1l3.8 3.8 1.5-1.5-3.8-3.8A5 5 0 0 0 6.5 1.5zm0 2a3 3 0 1 1 0 6 3 3 0 0 1 0-6z"/></svg>
<span class="t " id="t37" style="left:223.40px;top:684.00px;font-size:9px;color:#5b9bea;letter-spacing:0.395px;">Output</span>
<span class="t " id="t38" style="left:262.90px;top:684.00px;font-size:9px;color:#d4d5d8;letter-spacing:0.196px;">Debugger</span>
<span class="t " id="t39" style="left:314.20px;top:684.00px;font-size:9px;color:#d4d5d8;letter-spacing:0.214px;">Audio</span>
<span class="t " id="t40" style="left:348.00px;top:684.00px;font-size:9px;color:#d4d5d8;letter-spacing:0.319px;">Animation</span>
<span class="t " id="t41" style="left:401.00px;top:684.00px;font-size:9px;color:#d4d5d8;letter-spacing:0.043px;">Shader Editor</span>
<svg class="i" style="left:0;top:0;transform:translate(748.85px,679.05px);width:8.5px;height:8.5px;color:#414853;fill:#414853;" viewBox="0 0 16 16"><path d="M9 1.500C5 2 3.500 5 3.500 8.500c0 1.500-.8 2.500-2 3.500v1.500h9c2-1 3.500-3.500 3.500-7 0-2.500-2-5-5-5z"/></svg>
<span class="t " id="t42" style="left:763.90px;top:684.00px;font-size:9px;color:#787d86;letter-spacing:0.013px;">4.4.1.stable</span>
<svg class="i" style="left:0;top:0;transform:translate(819.95px,678.45px);width:9.5px;height:9.5px;color:#e0e0e0;fill:#e0e0e0;" viewBox="0 0 16 16"><path d="M3.500 1v2.500h1.200v3L3 8v2.300h4V14l1 1.800L9 14v-3.700h4V8l-1.700-1.500v-3h1.200V1z"/></svg>
<svg class="i" style="left:0;top:0;transform:translate(839.65px,678.45px);width:9.5px;height:9.5px;color:#e0e0e0;fill:#e0e0e0;" viewBox="0 0 16 16"><path d="M1 1.200h14v2H1zM4.500 5 1 9.700h2.400V15h2.200V9.700H8zm7 0L8 9.700h2.400V15h2.200V9.700H15z"/></svg>
<svg class="i" style="left:0;top:0;transform:translate(819.85px,505.05px);width:9.5px;height:9.5px;color:#e0e0e0;fill:#e0e0e0;" viewBox="0 0 16 16"><path d="M7 1v6.500H4.500A1.500 1.500 0 0 0 3 9v2h10V9a1.500 1.500 0 0 0-1.500-1.500H9V1zM3 12v3h2.500l.5-1.500.5 1.500H13v-3z"/></svg>
<svg class="i" style="left:0;top:0;transform:translate(840.05px,504.85px);width:9.5px;height:9.5px;color:#e0e0e0;fill:#e0e0e0;" viewBox="0 0 16 16"><path d="M3 .8A2.200 2.200 0 0 0 .8 3v7.200h2V3a.2.200 0 0 1 .2-.2h7.200v-2z"/><path d="M6.200 4A2.200 2.200 0 0 0 4 6.200V13a2.200 2.200 0 0 0 2.200 2.200H13a2.200 2.200 0 0 0 2.200-2.200V6.200A2.200 2.200 0 0 0 13 4zm.3 2.300h2.400v2.600H6.500zm3.800 0h2.500v2.600h-2.500zm-3.800 4h2.400v2.500H6.500zm3.800 0h2.500v2.500h-2.500z"/></svg>
<div class="b" style="left:816.5px;top:520.2px;width:36.50px;height:0.70px;background:#3a424e;"></div>
<svg class="i" style="left:0;top:0;transform:translate(819.85px,527.25px);width:9.5px;height:9.5px;color:#e0e0e0;fill:#e0e0e0;" viewBox="0 0 16 16"><path d="M1 1.500h14v2.200H1zm7 5.400h7v2.200H8zm0 5.400h7v2.200H8zM3.800 5.500.8 9.500h2v5h2v-5h2z"/></svg>
<div class="b" style="left:836.2px;top:524.3px;width:16.80px;height:15.45px;background:#1c2028;border-radius:2.5px;"></div>
<svg class="i" style="left:0;top:0;transform:translate(839.35px,526.85px);width:10.3px;height:10.3px;color:#5c9ae8;fill:#5c9ae8;" viewBox="0 0 16 16"><path d="M6.5 1.5a5 5 0 1 0 2.9 9.1l3.8 3.8 1.5-1.5-3.8-3.8A5 5 0 0 0 6.5 1.5zm0 2a3 3 0 1 1 0 6 3 3 0 0 1 0-6z"/></svg>
<div class="b" style="left:816.5px;top:542.7px;width:36.50px;height:0.70px;background:#3a424e;"></div>
<div class="b" style="left:815.9px;top:546.5px;width:37.80px;height:19.50px;background:#1e222b;border-radius:2.5px;border-bottom:2px solid #497cc4;box-sizing:border-box;"></div>
<svg class="i" style="left:0;top:0;transform:translate(819.95px,550.70px);width:9.3px;height:9.3px;color:#e0e0e0;fill:#e0e0e0;" viewBox="0 0 16 16"><rect x=".8" y=".8" width="14.400" height="14.400" rx="2.300"/><path d="M6.800 3.200h2.400V9H6.800zm0 7.600h2.400v2.200H6.800z" fill="#20242c"/></svg>
<span class="t " id="t43" style="left:839.60px;top:556.00px;font-size:9px;color:#5a8fd8;letter-spacing:-2.216px;">1</span>
<div class="b" style="left:815.9px;top:567.6px;width:37.80px;height:19.60px;background:#1e222b;border-radius:2.5px;border-bottom:2px solid #497cc4;box-sizing:border-box;"></div>
<svg class="i" style="left:0;top:0;transform:translate(819.95px,571.85px);width:9.3px;height:9.3px;color:#e0e0e0;fill:#e0e0e0;" viewBox="0 0 16 16"><circle cx="8" cy="8" r="7.200" fill="#f2564d"/><path d="M4.400 5.900 5.900 4.400 8 6.500l2.100-2.100 1.500 1.500L9.500 8l2.100 2.100-1.500 1.500L8 9.500l-2.100 2.100-1.500-1.500L6.500 8z" fill="#20242c"/></svg>
<span class="t " id="t44" style="left:838.30px;top:577.00px;font-size:9px;color:#5a8fd8;letter-spacing:-0.116px;">0</span>
<div class="b" style="left:815.9px;top:589.8px;width:37.80px;height:19.00px;background:#1e222b;border-radius:2.5px;border-bottom:2px solid #497cc4;box-sizing:border-box;"></div>
<svg class="i" style="left:0;top:0;transform:translate(819.95px,593.75px);width:9.3px;height:9.3px;color:#e0e0e0;fill:#e0e0e0;" viewBox="0 0 16 16"><circle cx="8" cy="8" r="7.200" fill="#f5d244"/><path d="M6.800 3.200h2.400V9H6.800zm0 7.600h2.400v2.200H6.800z" fill="#20242c"/></svg>
<span class="t " id="t45" style="left:838.30px;top:599.00px;font-size:9px;color:#5a8fd8;letter-spacing:-0.116px;">0</span>
<div class="b" style="left:815.9px;top:611.4px;width:37.80px;height:19.20px;background:#1e222b;border-radius:2.5px;border-bottom:2px solid #497cc4;box-sizing:border-box;"></div>
<svg class="i" style="left:0;top:0;transform:translate(819.95px,615.45px);width:9.3px;height:9.3px;color:#e0e0e0;fill:#e0e0e0;" viewBox="0 0 16 16"><path d="M6.200 1a.7.700 0 0 0-.7.700V4h5V1.700a.7.700 0 0 0-.7-.7zM5.500 5v6.500L8 15.500l2.500-4V5zm1.700 1.500h1.600v4.300H7.200z"/></svg>
<span class="t " id="t46" style="left:838.30px;top:621.00px;font-size:9px;color:#5a8fd8;letter-spacing:-0.116px;">2</span>
<div class="b" style="left:858px;top:52px;width:219.20px;height:17.00px;background:#21262e;border-radius:2.500px 2.500px 0 0;"></div><div class="b" style="left:858px;top:68.7px;width:219.20px;height:626.60px;background:#2d333f;border-radius:0 0 2.500px 2.500px;"></div><div class="b" style="left:858px;top:52px;width:53.00px;height:17.20px;background:#2d333f;border-top:2px solid #4171b0;box-sizing:border-box;border-radius:1.500px 1.500px 0 0;"></div>
<span class="t " id="t47" style="left:865.50px;top:61.00px;font-size:9px;color:#d4d5d8;letter-spacing:0.219px;">Inspector</span>
<span class="t " id="t48" style="left:918.25px;top:61.00px;font-size:9px;color:#73777f;letter-spacing:0.059px;">Node</span>
<span class="t " id="t49" style="left:954.25px;top:61.00px;font-size:9px;color:#73777f;letter-spacing:0.212px;">History</span>
<svg class="i" style="left:0;top:0;transform:translate(1067.50px,56.50px);width:9px;height:9px;color:#7a7e86;fill:#7a7e86;" viewBox="0 0 16 16"><circle cx="8" cy="1.700" r="1.950"/><circle cx="8" cy="8" r="1.950"/><circle cx="8" cy="14.300" r="1.950"/></svg>
<svg class="i" style="left:0;top:0;transform:translate(865.00px,76.30px);width:10px;height:10px;color:#e0e0e0;fill:#e0e0e0;" viewBox="0 0 16 16"><path d="M3 1a1 1 0 0 0-1 1v12a1 1 0 0 0 1 1h5.500v-2.500h-2v-4h2V6.500h4V5.500L9 1zm5.500 1.300 3 3.200h-3z"/><path d="M10 8.500v2.500H7.500v2.600H10V16h2.600v-2.400H15V11h-2.400V8.500z" fill="#6fd160"/></svg>
<svg class="i" style="left:0;top:0;transform:translate(884.50px,76.30px);width:10px;height:10px;color:#e0e0e0;fill:#e0e0e0;" viewBox="0 0 16 16"><path d="M2 1.500a1.500 1.500 0 0 0-1.500 1.500v10.500a1 1 0 0 0 1 1h.8L4.500 7h9V5a1 1 0 0 0-1-1H8L6.500 2A1.500 1.500 0 0 0 5.500 1.500z"/><path d="M5.300 8 3.300 14.500h10.200l2-6.500z"/></svg>
<svg class="i" style="left:0;top:0;transform:translate(904.25px,76.30px);width:10px;height:10px;color:#e0e0e0;fill:#e0e0e0;opacity:0.35;" viewBox="0 0 16 16"><path d="M3 1a2 2 0 0 0-2 2v10a2 2 0 0 0 2 2h10a2 2 0 0 0 2-2V4l-3-3zm1 1h7.500v4.500H4zm4.500.7v3h2v-3zM8 8.500a2.600 2.600 0 1 1 0 5.200 2.600 2.600 0 0 1 0-5.200z"/></svg>
<svg class="i" style="left:0;top:0;transform:translate(924.50px,76.30px);width:10px;height:10px;color:#e0e0e0;fill:#e0e0e0;" viewBox="0 0 16 16"><circle cx="8" cy="1.700" r="1.950"/><circle cx="8" cy="8" r="1.950"/><circle cx="8" cy="14.300" r="1.950"/></svg>
<svg class="i" style="left:0;top:0;transform:translate(1029.05px,76.75px);width:9.5px;height:9.5px;color:#868a92;fill:#868a92;" viewBox="0 0 16 16"><path d="M10.800 1.500 5.200 8l5.600 6.500" fill="none" stroke="currentColor" stroke-width="1.700" stroke-linecap="round" stroke-linejoin="round"/></svg>
<svg class="i" style="left:0;top:0;transform:translate(1043.95px,76.75px);width:9.5px;height:9.5px;color:#868a92;fill:#868a92;" viewBox="0 0 16 16"><path d="M5.200 1.500 10.800 8l-5.600 6.500" fill="none" stroke="currentColor" stroke-width="1.700" stroke-linecap="round" stroke-linejoin="round"/></svg>
<svg class="i" style="left:0;top:0;transform:translate(1061.65px,76.75px);width:9.5px;height:9.5px;color:#8c9098;fill:#8c9098;" viewBox="0 0 16 16"><path d="M8.800 1.300a6.700 6.700 0 0 0-6.600 5.900H0l3.300 4.300 3.300-4.300H4.300a4.600 4.600 0 1 1 1.300 4l-1.500 1.500A6.700 6.700 0 1 0 8.800 1.300zM8 4.500v4.200l3.200 1.700.8-1.500-2.300-1.200V4.500z"/></svg>
<div class="b" style="left:861px;top:92px;width:193.70px;height:18.00px;background:#272d37;border-radius:2px;"></div>
<svg class="i" style="left:0;top:0;transform:translate(1061.10px,96.50px);width:10px;height:10px;color:#a0a3a9;fill:#a0a3a9;" viewBox="0 0 16 16"><path d="M10 0a4 4 0 0 0-3.300 6.300L3.200 9.800l1.400 1.400 3.500-3.500A4 4 0 1 0 10 0zm0 1.800a2.200 2.200 0 1 1 0 4.400 2.200 2.200 0 0 1 0-4.400z"/><text x="0" y="16" font-size="6.800" font-weight="bold" font-family="Liberation Sans, sans-serif" textLength="16" lengthAdjust="spacingAndGlyphs">DOC</text></svg>
<div class="b" style="left:861px;top:114.7px;width:193.70px;height:16.30px;background:#272d37;border-radius:2px;"></div>
<span class="t " id="t50" style="left:865.00px;top:123.00px;font-size:9px;color:#a4a7ac;letter-spacing:0.086px;">Filter Properties</span>
<svg class="i" style="left:0;top:0;transform:translate(1040.75px,117.95px);width:10.3px;height:10.3px;color:#a5a8ad;fill:#a5a8ad;" viewBox="0 0 16 16"><path d="M6.5 1.5a5 5 0 1 0 2.9 9.1l3.8 3.8 1.5-1.5-3.8-3.8A5 5 0 0 0 6.5 1.5zm0 2a3 3 0 1 1 0 6 3 3 0 0 1 0-6z"/></svg>
<svg class="i" style="left:0;top:0;transform:translate(1061.10px,117.80px);width:10px;height:10px;color:#b8bbc0;fill:#b8bbc0;" viewBox="0 0 16 16"><path d="M3.300 1v1.800h2.200V1zm.3 2.500v3.800a2.800 2.800 0 0 0-1.700 2.600V13a2.500 2.500 0 0 0 5 0V9.900a2.800 2.800 0 0 0-1.700-2.600V3.500zM10 1v3a2.500 2.500 0 0 0 1.400 2.200V14a1.100 1.100 0 0 0 2.200 0V6.200A2.500 2.500 0 0 0 15 4V1h-1.600v2.800h-1.800V1z"/></svg>
<div class="b" style="left:861px;top:135.5px;width:213.70px;height:557.00px;background:#1e222a;border-radius:2px;"></div>
</div>
</body></html>
